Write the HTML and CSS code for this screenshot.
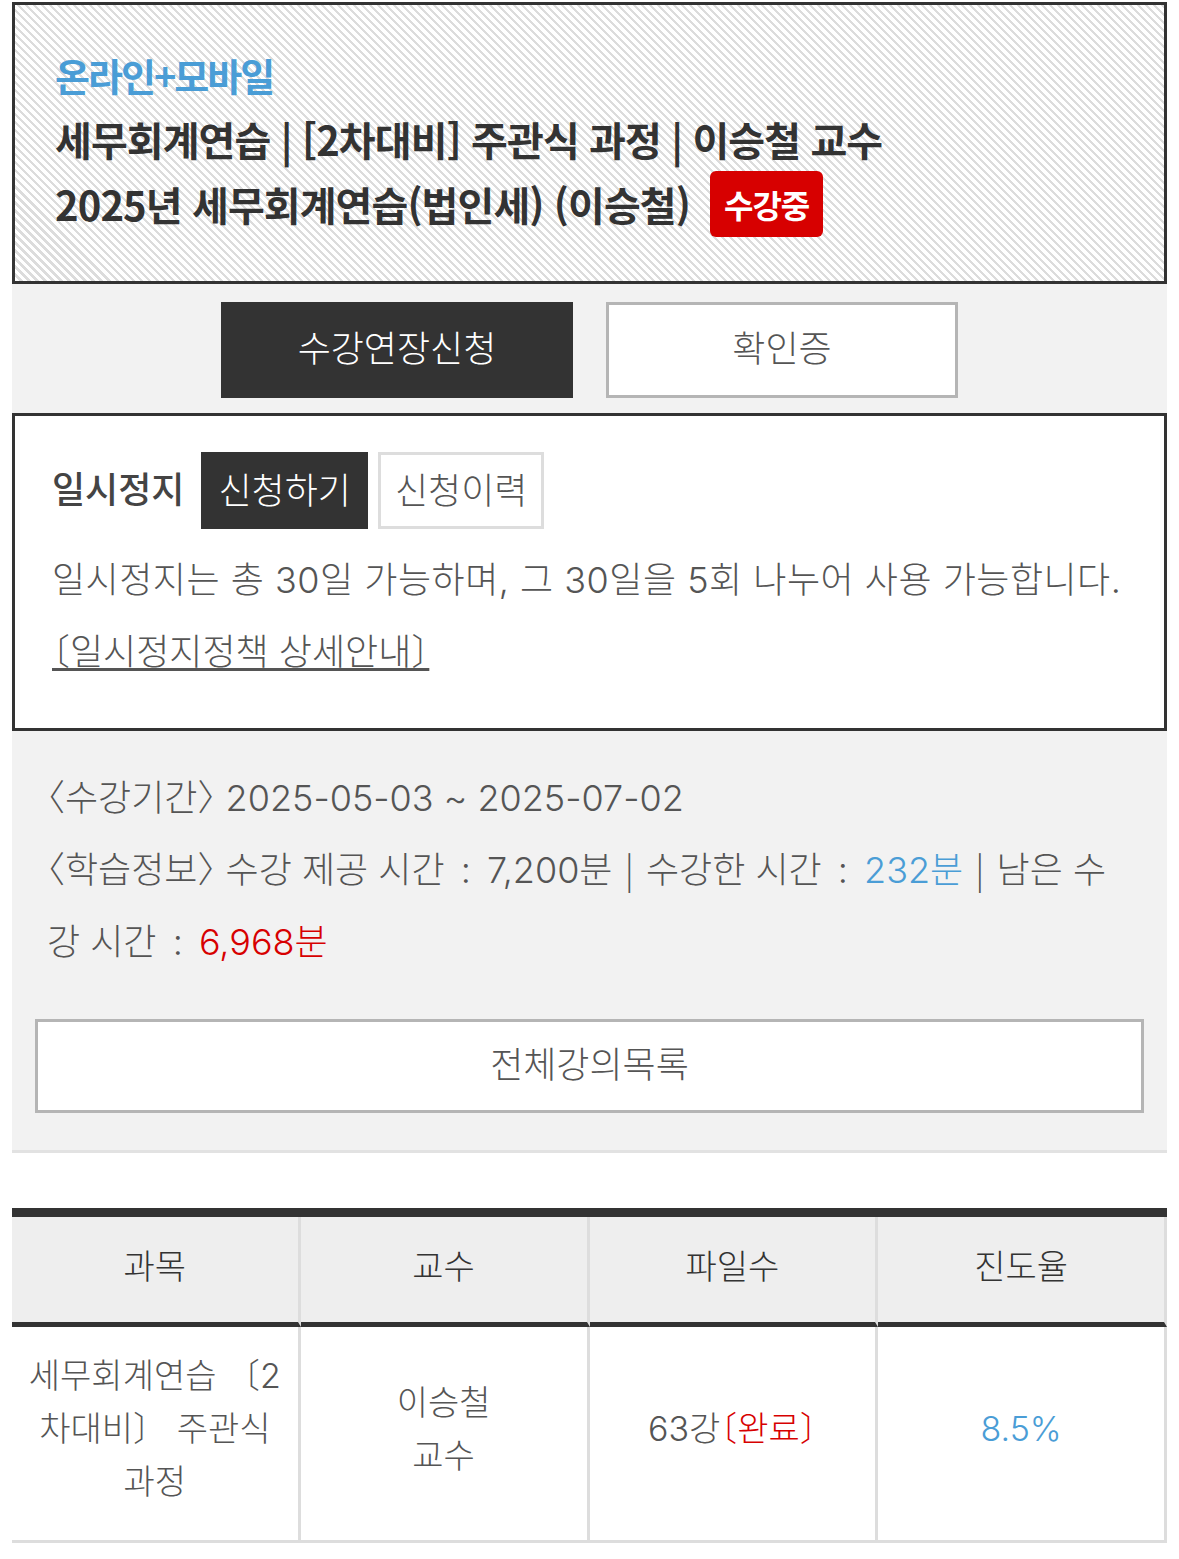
FILE: index.html
```html
<!DOCTYPE html>
<html lang="ko">
<head>
    <meta charset="UTF-8">
    <meta name="viewport" content="width=device-width, initial-scale=1.0">
    <title>내 강의실 - 세무회계연습</title>
    <link rel="stylesheet" href="styles.css">
</head>
<body>
    <div class="container">
        <div class="course-head">
            <div class="course-type">온라인+모바일</div>
            <div class="course-title">세무회계연습 | [2차대비] 주관식 과정 | 이승철 교수</div>
            <div class="course-title course-name">
                <span>2025년 세무회계연습(법인세) (이승철)</span>
                <span class="badge">수강중</span>
            </div>
        </div>

        <div class="course-body">
            <div class="btn-row">
                <a href="#" class="btn btn-dark">수강연장신청</a>
                <a href="#" class="btn btn-line">확인증</a>
            </div>

            <div class="pause-box">
                <div class="pause-head">
                    <strong class="pause-label">일시정지</strong>
                    <a href="#" class="pause-btn active">신청하기</a>
                    <a href="#" class="pause-btn">신청이력</a>
                </div>
                <p class="pause-desc">일시정지는 총 30일 가능하며, 그 30일을 5회 나누어 사용 가능합니다.</p>
                <a href="#" class="pause-link">〔일시정지정책 상세안내〕</a>
            </div>

            <div class="study-info">
                <p>〈수강기간〉 2025-05-03 ~ 2025-07-02</p>
                <p>〈학습정보〉 수강 제공 시간 <span class="colon">:</span> 7,200분 <span class="bar">|</span> 수강한 시간 <span class="colon">:</span> <span class="blue">232분</span> <span class="bar">|</span> 남은 수강 시간 <span class="colon">:</span> <span class="red">6,968분</span></p>
            </div>

            <a href="#" class="btn btn-line btn-full">전체강의목록</a>
        </div>

        <table class="lecture-table">
            <thead>
                <tr>
                    <th>과목</th>
                    <th>교수</th>
                    <th>파일수</th>
                    <th>진도율</th>
                </tr>
            </thead>
            <tbody>
                <tr>
                    <td class="subject">세무회계연습 〔2차대비〕 주관식 과정</td>
                    <td>이승철<br>교수</td>
                    <td>63강<span class="red">〔완료〕</span></td>
                    <td><span class="blue">8.5%</span></td>
                </tr>
            </tbody>
        </table>
    </div>
</body>
</html>
```

FILE: styles.css
```css
* {
    margin: 0;
    padding: 0;
    box-sizing: border-box;
}

body {
    background: #fff;
    color: #555;
    font-family: "Inter", "Noto Sans CJK KR", sans-serif;
    font-size: 36px;
    font-weight: 300;
    font-feature-settings: "halt";
}

a {
    color: inherit;
    text-decoration: none;
}

.container {
    padding: 2px 12px 0;
}

.blue {
    color: #4a9dd6;
}

.red {
    color: #d70000;
}

/* course header */
.course-head {
    border: 3px solid #333;
    padding: 38px 40px 44px;
    background: repeating-linear-gradient(45deg, #fff 0, #fff 3.5px, #dcdcdc 3.5px, #dcdcdc 5.66px);
    font-family: "Noto Sans CJK KR", sans-serif;
}

.course-type {
    color: #4a9dd6;
    font-size: 38px;
    font-weight: 700;
    letter-spacing: -2px;
    line-height: 64px;
}

.course-title {
    color: #333;
    font-size: 40px;
    font-weight: 700;
    letter-spacing: -0.9px;
    line-height: 64px;
}

.course-name {
    display: flex;
    align-items: center;
    gap: 20px;
    height: 66px;
}

.badge {
    display: inline-block;
    background: #d70000;
    color: #fff;
    font-size: 32px;
    letter-spacing: -1px;
    line-height: 66px;
    padding: 0 14px;
    border-radius: 6px;
}

/* gray body */
.course-body {
    background: #f2f2f2;
    border-bottom: 3px solid #e2e2e2;
    padding: 18px 0 37px;
}

.btn-row {
    display: flex;
    justify-content: center;
    gap: 33px;
    margin-bottom: 15px;
}

.btn {
    display: flex;
    align-items: center;
    justify-content: center;
    width: 352px;
    height: 96px;
    padding-bottom: 8px;
    font-size: 36px;
}

.btn-dark {
    background: #333;
    color: #fff;
}

.btn-line {
    background: #fff;
    border: 3px solid #b5b5b5;
    color: #555;
}

.btn-full {
    width: auto;
    height: 94px;
    margin: 41px 23px 0;
}

.pause-box {
    background: #fff;
    border: 3px solid #333;
    padding: 36px 37px 40px;
}

.pause-head {
    display: flex;
    align-items: center;
    gap: 10px;
}

.pause-label {
    color: #444;
    font-weight: 500;
    margin-right: 7px;
    padding-bottom: 7px;
}

.pause-btn {
    height: 77px;
    padding: 0 14px 6px;
    display: flex;
    align-items: center;
    border: 3px solid #ddd;
    background: #fff;
}

.pause-btn.active {
    background: #333;
    border-color: #333;
    color: #fff;
}

.pause-desc {
    margin-top: 15px;
    line-height: 72px;
    letter-spacing: 0.5px;
}

.pause-link {
    display: inline-block;
    line-height: 72px;
    text-decoration: underline;
    text-underline-offset: 3px;
}

.study-info {
    padding: 31px 35px 0;
    line-height: 72px;
}

.colon {
    margin: 0 6px;
}

.bar {
    font-family: "Noto Sans CJK KR", sans-serif;
    line-height: 0;
    margin: 0 2px;
}

/* lecture table */
.lecture-table {
    width: 100%;
    margin-top: 55px;
    border-collapse: separate;
    border-spacing: 0;
    border-top: 9px solid #333;
    table-layout: fixed;
    text-align: center;
    font-size: 34px;
}

.lecture-table th {
    height: 110px;
    padding-bottom: 10px;
    background: #eee;
    color: #333;
    font-weight: 300;
    border-right: 3px solid #ddd;
    border-bottom: 5px solid #333;
}

.lecture-table td {
    height: 216px;
    padding: 0 14px 10px;
    line-height: 53px;
    border-right: 3px solid #ddd;
    border-bottom: 3px solid #ddd;
}

.lecture-table .subject {
    padding: 0 12px 10px;
    font-feature-settings: normal;
}
```
